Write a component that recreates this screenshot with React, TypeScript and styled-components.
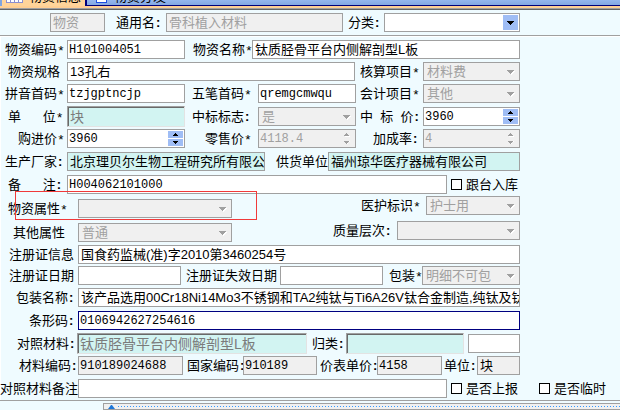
import React from "react";
import styled, { createGlobalStyle, css } from "styled-components";

const GlobalStyle = createGlobalStyle`
  * { box-sizing: border-box; }
  body { margin: 0; background: #effbff; overflow: hidden; }
  body, button, input, select {
    font-family: "Liberation Sans", "Noto Sans CJK SC", sans-serif;
    font-size: 13px;
    color: #000;
  }
`;

const TabBar = styled.nav`
  display: flex;
  height: 6px;
  background: linear-gradient(#94b6ee, #7fa5e0);
`;
const Tab = styled.button<{ $active?: boolean }>`
  display: flex;
  align-items: flex-end;
  gap: 6px;
  height: 6px;
  padding: 0 4px 3px 4px;
  overflow: hidden;
  border: 0;
  border-left: 2px solid ${p => (p.$active ? "#7fa5e0" : "#00007b")};
  border-bottom: ${p => (p.$active ? "0" : "1px solid #00007b")};
  background: ${p => (p.$active ? "#ffd49a" : "transparent")};
  line-height: 13px;
  white-space: nowrap;
  svg { flex: none; display: block; }
`;
const SecondTab = styled(Tab)`
  flex: 1;
  gap: 7px;
  padding: 0 9px 2px;
`;
const TabEdge = styled.div`
  height: 4px;
  background: #ffcf94;
  border-bottom: 1px solid #636363;
  box-shadow: inset 0 -1px #a0a0a0;
`;

const Toolbar = styled.div`
  padding: 3px 100px 3px 50px;
  border-bottom: 1px solid #a0a0a0;
  box-shadow: 0 1px #fff;
`;
const Form = styled.form`
  position: relative;
  padding: 4px 100px 2px 0;
  border-bottom: 1px solid #a0a0a0;
  box-shadow: inset 1px 0 #fff;
`;
const Row = styled.div<{ $cols: string; $gap?: number }>`
  display: grid;
  grid-template-columns: ${p => p.$cols};
  align-items: center;
  justify-content: end;
  height: 19px;
  margin-top: ${p => p.$gap ?? 0}px;
`;
const WideRow = styled(Row)`
  margin-right: -100px;
`;
const Split = styled.div`
  display: flex;
  align-items: flex-start;
  margin-top: 2px;
`;
const SplitLeft = styled.div`
  position: relative;
  width: 232px;
  padding-top: 3px;
`;
const SplitRight = styled.div`
  flex: 1;
`;
const Highlight = styled.div`
  position: absolute;
  left: 15px;
  top: -5px;
  width: 242px;
  height: 29px;
  border: 1px solid #f03a3a;
  pointer-events: none;
`;

const LabelText = styled.label<{ $start: number }>`
  padding-left: ${p => p.$start}px;
  line-height: 19px;
  white-space: pre;
`;
const Star = styled.span`
  display: inline-block;
  height: 13px;
  line-height: 17px;
  vertical-align: top;
  margin-top: 3px;
  font-family: "Liberation Mono", monospace;
`;
const Colon = styled.span`
  padding-left: 1px;
  font-weight: bold;
`;

const boxed = css`
  width: 100%;
  height: 19px;
  border: 1px solid #a0a0a0;
  border-radius: 0;
  outline: 0;
`;
const TextBox = styled.input<{ $mono?: boolean; $tone?: string; $focus?: boolean }>`
  ${boxed}
  padding: 0 0 2px 2px;
  background: ${p => p.$tone ?? "#fff"};
  ${p => p.$focus && "border-color: #000080;"}
  ${p => p.$mono && 'font-family: "Liberation Mono", monospace; font-size: 12px; padding: 0 0 0 1px;'}
  &:disabled { background: #f0f0f0; color: #a0a0a0; }
`;
const InsetBox = styled(TextBox)`
  height: 21px;
  border: 1px solid;
  border-color: #a0a0a0 #e3e3e3 #e3e3e3 #a0a0a0;
  box-shadow: inset 1px 1px #696969;
  background: #d2f4f2;
  color: #7b7b7b;
  font-size: 14px;
`;
const SelectWrap = styled.div`
  position: relative;
  height: 19px;
`;
const SelectBox = styled.select`
  ${boxed}
  display: block;
  appearance: none;
  padding: 0 0 1px 3px;
  background: #fff;
  &:disabled { background: #f0f0f0; color: #a0a0a0; opacity: 1; }
`;
const Arrow = styled.span<{ $live?: boolean }>`
  position: absolute;
  right: 2px;
  top: 2px;
  display: grid;
  place-items: center;
  width: 15px;
  height: 15px;
  background: ${p => (p.$live ? "#9fbdf5" : "transparent")};
  pointer-events: none;
`;
const SpinWrap = styled.div<{ $off?: boolean }>`
  ${boxed}
  display: flex;
  padding: 1px 1px 1px 1px;
  background: ${p => (p.$off ? "#f0f0f0" : "#fff")};
`;
const SpinInput = styled.input`
  flex: 1;
  min-width: 0;
  padding: 0;
  border: 0;
  outline: 0;
  background: transparent;
  font-family: "Liberation Mono", monospace;
  font-size: 12px;
  &:disabled { color: #a0a0a0; }
`;
const SpinButtons = styled.div`
  display: grid;
  grid-template-rows: 7px 7px;
  gap: 1px;
  width: 15px;
`;
const SpinButton = styled.button`
  display: grid;
  place-items: center;
  padding: 0;
  border: 0;
  background: #9fbdf5;
  &:disabled { background: transparent; }
`;
const CheckLabel = styled.label`
  display: flex;
  align-items: center;
  gap: 4px;
  padding-left: 4px;
  line-height: 19px;
  white-space: nowrap;
`;
const CheckBox = styled.input`
  appearance: none;
  width: 11px;
  height: 11px;
  margin: 0;
  border: 1px solid #000;
  background: #fff;
  &:checked { background: #000; }
`;
const ExtraCell = styled.div`
  display: flex;
  padding-left: 4px;
`;
const Splitter = styled.div`
  display: flex;
  align-items: center;
  gap: 3px;
  height: 7px;
  margin: 2px 0 0 103px;
  padding-left: 4px;
  border: 1px solid #a0a0a0;
  border-right: 0;
  background: #f0f0f0;
  svg { display: block; }
`;
const Dots = styled.div`
  flex: 1;
  height: 1px;
  background: repeating-linear-gradient(90deg, #3399ff 0 1px, transparent 1px 3px);
`;

const DownGlyph = ({ off }: { off?: boolean }) => (
  <svg width="9" height="6" viewBox="0 0 9 6" shapeRendering="crispEdges">
    {off && <path d="M2 2h7v1h-1v1h-1v1h-1v1h-1v-1h-1v-1h-1v-1h-1z" fill="#fff" />}
    <path d="M1 1h7v1h-1v1h-1v1h-1v1h-1v-1h-1v-1h-1v-1h-1z" fill={off ? "#a0a0a0" : "#000"} />
  </svg>
);
const SpinGlyph = ({ up, off }: { up?: boolean; off?: boolean }) => (
  <svg width="7" height="5" viewBox="0 0 7 5" shapeRendering="crispEdges">
    {off && <path d={up ? "M2 4h5v1h-5z" : "M6 1h1v1h-1v1h-1v1h-1v-1h2z"} fill="#fff" />}
    <path
      d={up ? "M3 1h1v1h1v1h1v1h-5v-1h1v-1h1z" : "M1 1h5v1h-1v1h-1v1h-1v-1h-1v-1h-1z"}
      fill={off ? "#a0a0a0" : "#000"}
    />
  </svg>
);

const Label = ({ id, start, text }: { id: string; start: number; text: string }) => {
  const mark = text.slice(-1);
  const marked = mark === "*" || mark === ":";
  return (
    <LabelText htmlFor={id} $start={start}>
      {marked ? text.slice(0, -1) : text}
      {mark === "*" && <Star>*</Star>}
      {mark === ":" && <Colon>:</Colon>}
    </LabelText>
  );
};
const Select = ({ id, value, live }: { id: string; value?: string; live?: boolean }) => (
  <SelectWrap>
    <SelectBox id={id} disabled={!live} defaultValue={value ?? ""}>
      <option>{value ?? ""}</option>
    </SelectBox>
    <Arrow $live={live}><DownGlyph off={!live} /></Arrow>
  </SelectWrap>
);
const Spin = ({ id, value, off }: { id: string; value: string; off?: boolean }) => (
  <SpinWrap $off={off}>
    <SpinInput id={id} defaultValue={value} disabled={off} inputMode="decimal" />
    <SpinButtons>
      <SpinButton type="button" aria-label="增加" disabled={off}><SpinGlyph up off={off} /></SpinButton>
      <SpinButton type="button" aria-label="减少" disabled={off}><SpinGlyph off={off} /></SpinButton>
    </SpinButtons>
  </SpinWrap>
);
const Check = ({ text }: { text: string }) => (
  <CheckLabel><CheckBox type="checkbox" />{text}</CheckLabel>
);

const three = "67px 118px 73px minmax(0, 1fr) 67px 97px";
const TEAL = "#d2f4f2";
const GREY = "#f0f0f0";

export default function App() {
  return (
    <>
      <GlobalStyle />
      <TabBar>
        <Tab $active type="button">
          <svg width="17" height="5" viewBox="0 0 17 5" shapeRendering="crispEdges">
            <path d="M0 0h17v5h-17z" fill="#8a8fd0" />
            <path d="M1 0h3v4h-3zM5 0h3v4h-3zM9 0h3v4h-3zM13 0h3v4h-3z" fill="#fff" />
          </svg>
          物资信息
        </Tab>
        <SecondTab type="button">
          <svg width="11" height="5" viewBox="0 0 11 5" shapeRendering="crispEdges">
            <path d="M0 0h11v5h-11z" fill="#1c4fe0" />
            <path d="M1 0h9v4h-9z" fill="#fff" />
          </svg>
          物资分发
        </SecondTab>
      </TabBar>
      <TabEdge />
      <Toolbar>
        <Row $cols="55px 61px 177px 41px minmax(0, 1fr)">
          <TextBox aria-label="类型" defaultValue="物资" disabled />
          <Label id="common" start={11} text="通用名:" />
          <TextBox id="common" defaultValue="骨科植入材料" disabled />
          <Label id="category" start={5} text="分类:" />
          <Select id="category" live />
        </Row>
      </Toolbar>
      <Form>
        <Row $cols="67px 118px 67px minmax(0, 1fr)">
          <Label id="code" start={5} text="物资编码*" />
          <TextBox id="code" $mono defaultValue="H101004051" />
          <Label id="name" start={8} text="物资名称*" />
          <TextBox id="name" defaultValue="钛质胫骨平台内侧解剖型L板" />
        </Row>
        <Row $gap={3} $cols="67px minmax(0, 1fr) 68px 97px">
          <Label id="spec" start={8} text="物资规格" />
          <TextBox id="spec" defaultValue="13孔右" />
          <Label id="costItem" start={5} text="核算项目*" />
          <Select id="costItem" value="材料费" />
        </Row>
        <Row $gap={3} $cols={three}>
          <Label id="pinyin" start={5} text="拼音首码*" />
          <TextBox id="pinyin" $mono defaultValue="tzjgptncjp" />
          <Label id="wubi" start={7} text="五笔首码*" />
          <TextBox id="wubi" $mono defaultValue="qremgcmwqu" />
          <Label id="account" start={4} text="会计项目*" />
          <Select id="account" value="其他" />
        </Row>
        <Row $gap={3} $cols={three}>
          <Label id="unit" start={8} text="单      位*" />
          <InsetBox id="unit" readOnly defaultValue="块" />
          <Label id="bidFlag" start={7} text="中标标志:" />
          <Select id="bidFlag" value="是" />
          <Label id="bidPrice" start={4} text="中  标  价:" />
          <Spin id="bidPrice" value="3960" />
        </Row>
        <Row $gap={4} $cols={three}>
          <Label id="buyPrice" start={18} text="购进价*" />
          <Spin id="buyPrice" value="3960" />
          <Label id="retail" start={20} text="零售价*" />
          <Spin id="retail" value="4118.4" off />
          <Label id="markup" start={17} text="加成率:" />
          <Spin id="markup" value="4" off />
        </Row>
        <Row $gap={4} $cols="67px minmax(0, 1fr) 63px 192px">
          <Label id="maker" start={5} text="生产厂家:" />
          <TextBox id="maker" $tone={TEAL} defaultValue="北京理贝尔生物工程研究所有限公司" />
          <Label id="supplier" start={11} text="供货单位" />
          <TextBox id="supplier" $tone={TEAL} defaultValue="福州琼华医疗器械有限公司" />
        </Row>
        <Row $gap={4} $cols="67px minmax(0, 1fr) 73px">
          <Label id="remark" start={8} text="备      注:" />
          <TextBox id="remark" $mono defaultValue="H004062101000" />
          <Check text="跟台入库" />
        </Row>
        <Split>
          <SplitLeft>
            <Row $cols="78px minmax(0, 1fr)">
              <Label id="property" start={8} text="物资属性*" />
              <Select id="property" />
            </Row>
            <Row $gap={5} $cols="78px minmax(0, 1fr)">
              <Label id="other" start={13} text="其他属性" />
              <Select id="other" value="普通" />
            </Row>
            <Highlight />
          </SplitLeft>
          <SplitRight>
            <Row $cols="65px 94px">
              <Label id="nursing" start={0} text="医护标识*" />
              <Select id="nursing" value="护士用" />
            </Row>
            <Row $gap={6} $cols="64px 123px">
              <Label id="quality" start={0} text="质量层次:" />
              <Select id="quality" />
            </Row>
          </SplitRight>
        </Split>
        <Row $gap={3} $cols="78px minmax(0, 1fr)">
          <Label id="regInfo" start={9} text="注册证信息" />
          <TextBox id="regInfo" defaultValue="国食药监械(准)字2010第3460254号" />
        </Row>
        <Row $gap={2} $cols="78px 103px 99px minmax(0, 1fr) 39px 98px">
          <Label id="regDate" start={9} text="注册证日期" />
          <TextBox id="regDate" />
          <Label id="expiry" start={5} text="注册证失效日期" />
          <TextBox id="expiry" />
          <Label id="pack" start={6} text="包装*" />
          <Select id="pack" value="明细不可包" />
        </Row>
        <Row $gap={3} $cols="78px minmax(0, 1fr)">
          <Label id="packName" start={16} text="包装名称:" />
          <TextBox id="packName" defaultValue="该产品选用00Cr18Ni14Mo3不锈钢和TA2纯钛与Ti6A26V钛合金制造,纯钛及钛" />
        </Row>
        <Row $gap={4} $cols="78px minmax(0, 1fr)">
          <Label id="barcode" start={29} text="条形码:" />
          <TextBox id="barcode" $mono $focus defaultValue="0106942627254616" />
        </Row>
        <Row $gap={3} $cols="77px 230px 39px minmax(0, 1fr) 56px">
          <Label id="refMaterial" start={17} text="对照材料:" />
          <InsetBox id="refMaterial" readOnly defaultValue="钛质胫骨平台内侧解剖型L板" />
          <Label id="classify" start={5} text="归类:" />
          <InsetBox id="classify" readOnly />
          <ExtraCell><TextBox aria-label="归类编码" /></ExtraCell>
        </Row>
        <Row $gap={4} $cols="78px 105px 60px 74px 60px minmax(0, 1fr) 35px 43px">
          <Label id="matCode" start={19} text="材料编码:" />
          <TextBox id="matCode" $mono $tone={GREY} readOnly defaultValue="910189024688" />
          <Label id="natCode" start={4} text="国家编码:" />
          <TextBox id="natCode" $mono $tone={GREY} readOnly defaultValue="910189" />
          <Label id="listPrice" start={3} text="价表单价:" />
          <TextBox id="listPrice" $mono $tone={GREY} readOnly defaultValue="4158" />
          <Label id="unit2" start={2} text="单位:" />
          <TextBox id="unit2" $tone={GREY} readOnly defaultValue="块" />
        </Row>
        <WideRow $gap={4} $cols="78px minmax(0, 1fr) 88px 85px">
          <Label id="refRemark" start={0} text="对照材料备注" />
          <TextBox id="refRemark" />
          <Check text="是否上报" />
          <Check text="是否临时" />
        </WideRow>
      </Form>
      <Splitter>
        <svg width="7" height="4" viewBox="0 0 7 4"><path d="M3 0h1l3 4h-7z" fill="#1e78d8" /></svg>
        <Dots />
      </Splitter>
    </>
  );
}
